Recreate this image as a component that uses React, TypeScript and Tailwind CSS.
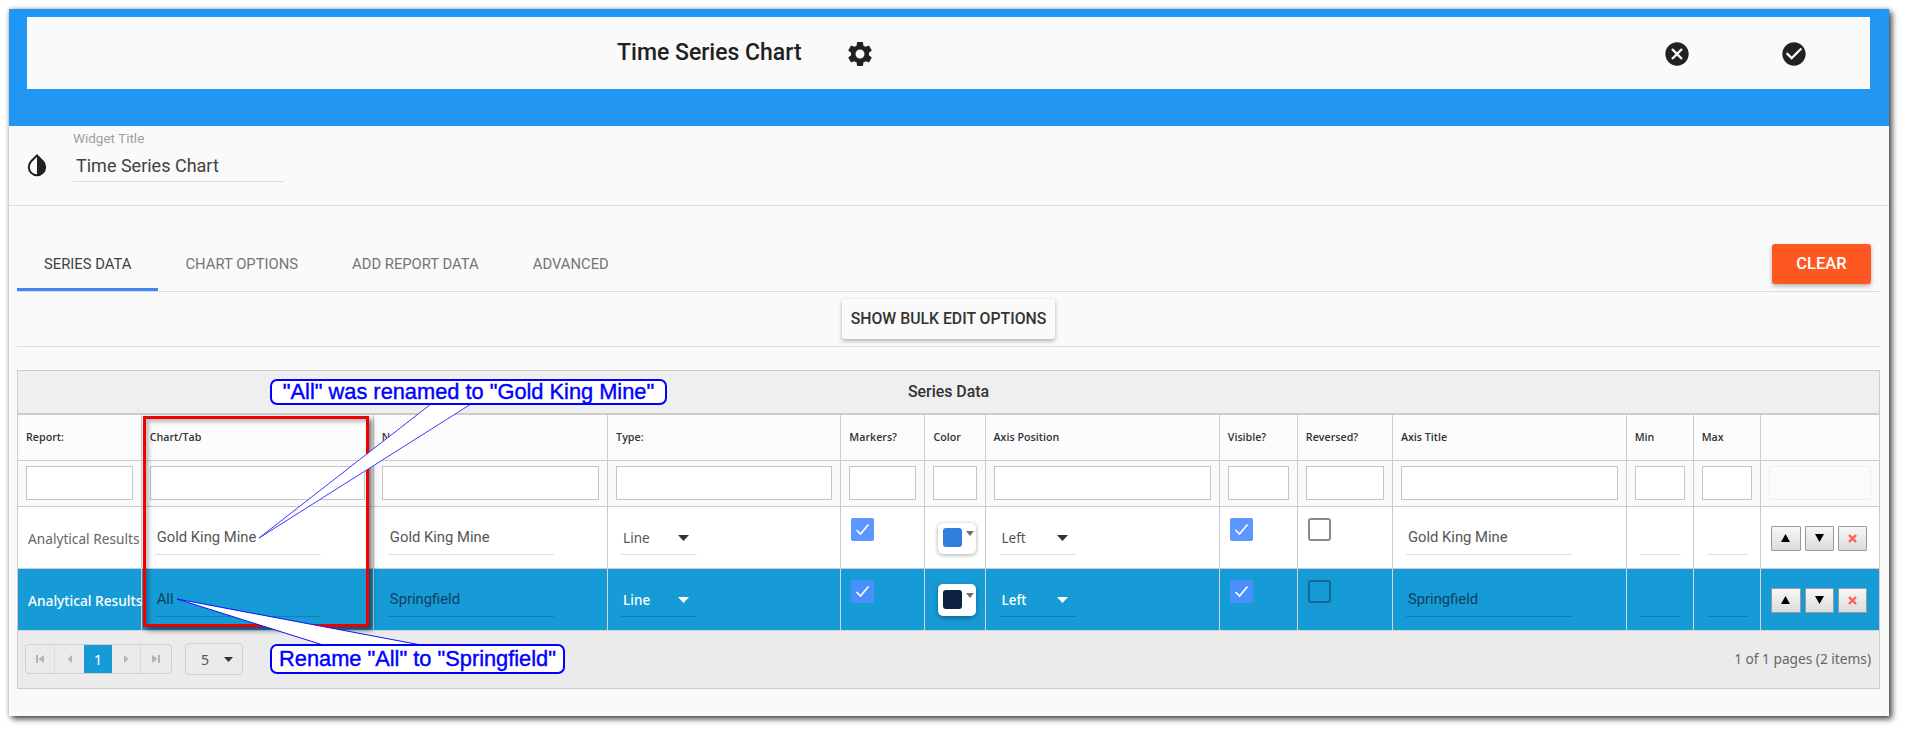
import { MdCancel, MdCheckCircle, MdSettings } from "react-icons/md";

const columns = [123, 232, 234, 233, 84, 60, 234, 78, 95, 233.5, 67, 67, 118.5];
const headers = ["Report:", "Chart/Tab", "Name", "Type:", "Markers?", "Color", "Axis Position", "Visible?", "Reversed?", "Axis Title", "Min", "Max", ""];

const Caret = ({ color, small }: { color: string; small?: boolean }) => (
    <svg width={small ? 9 : 11} height={small ? 5 : 6} viewBox="0 0 11 6" preserveAspectRatio="none" className="shrink-0">
        <path d="M0 0h11L5.500 6z" fill={color} />
    </svg>
);

const Field = ({ text, width, dark, left = 13 }: { text?: string; width: number; dark: boolean; left?: number }) => (
    <div
        className={`flex h-[48px] items-end border-b pb-[7px] pl-[2px] font-['Roboto',sans-serif] text-[14.800px] leading-[20px] ${dark ? "border-[#1280b5] text-[#0f3f5c]" : "border-[#e0e0e0] text-[#555555]"}`}
        style={{ width, marginLeft: left }}
    >
        {text}
    </div>
);

const SelectField = ({ text, dark, left }: { text: string; dark: boolean; left: number }) => (
    <div
        className={`flex h-[48px] w-[76px] items-end justify-between border-b pb-[6px] pl-[2px] pr-[8px] font-['Noto_Sans',sans-serif] text-[13.500px] leading-[20px] ${dark ? "border-[#1280b5] font-medium text-white" : "border-[#e0e0e0] text-[#555555]"}`}
        style={{ marginLeft: left }}
    >
        <span>{text}</span>
        <span className="mb-[7px]">
            <Caret color={dark ? "#ffffff" : "#333333"} />
        </span>
    </div>
);

const Check = ({ on, dark }: { on: boolean; dark: boolean }) =>
    on ? (
        <div className={`ml-[10px] mt-[11px] flex h-[23px] w-[23px] items-center justify-center rounded-[2px] ${dark ? "bg-[#4a8ffc]" : "bg-[#5c97ff]"}`}>
            <svg width="15" height="13" viewBox="0 0 15 13">
                <path d="M1.500 7l4 4L13.500 1.500" fill="none" stroke="#ffffff" strokeWidth="1.600" />
            </svg>
        </div>
    ) : (
        <div className={`ml-[10px] mt-[11px] h-[23px] w-[23px] rounded-[3px] border-2 ${dark ? "border-[#0f6a98]" : "border-[#8a8a8a] bg-white"}`} />
    );

const Swatch = ({ color, dark }: { color: string; dark: boolean }) => (
    <div
        className={`ml-[13px] flex w-[38px] items-start rounded-[5px] bg-white pl-[5px] ${dark ? "mt-[15px] h-[32px] pt-[6px] shadow-[0_2px_5px_rgba(0,0,0,0.35)]" : "mt-[16px] h-[31px] pt-[5px] shadow-[0_1px_4px_rgba(0,0,0,0.35)]"}`}
    >
        <div className="h-[19px] w-[19px] rounded-[3px]" style={{ backgroundColor: color }} />
        <svg width="8" height="5" viewBox="0 0 8 5" className="ml-[4px] mt-[3px]">
            <path d="M0 0h8L4 5z" fill="#6f6f6f" />
        </svg>
    </div>
);

const ActionButton = ({ width, children }: { width: number; children: React.ReactNode }) => (
    <div
        className="flex h-[25px] items-center justify-center rounded-[1px] border border-[#9a9a9a] bg-gradient-to-b from-[#f7f7f7] to-[#dcdcdc]"
        style={{ width }}
    >
        {children}
    </div>
);

const Actions = () => (
    <div className="flex gap-[4px] pl-[10px] pt-[19px]">
        <ActionButton width={30}>
            <svg width="9" height="8" viewBox="0 0 9 8"><path d="M4.500 0L9 8H0z" fill="#000000" /></svg>
        </ActionButton>
        <ActionButton width={29}>
            <svg width="9" height="8" viewBox="0 0 9 8"><path d="M0 0h9L4.500 8z" fill="#000000" /></svg>
        </ActionButton>
        <ActionButton width={29}>
            <svg width="9" height="9" viewBox="0 0 9 9"><path d="M1 1l7 7M8 1L1 8" stroke="#ff5c5c" strokeWidth="2.400" /></svg>
        </ActionButton>
    </div>
);

const DataRow = ({ chart, name, swatch, dark }: { chart: string; name: string; swatch: string; dark: boolean }) => {
    const cell = `h-[62px] border-r border-b p-0 align-top ${dark ? "border-[#d0d8dc]" : "border-[#cccccc]"}`;
    return (
        <tr className={dark ? "bg-[#179bd7]" : "bg-white"}>
            <td className={cell}>
                <div className={`whitespace-nowrap pl-[10px] pt-[22px] font-['Noto_Sans',sans-serif] text-[13.700px] leading-[20px] ${dark ? "font-medium text-white" : "text-[#666666]"}`}>
                    Analytical Results
                </div>
            </td>
            <td className={cell}><Field text={chart} width={166} dark={dark} /></td>
            <td className={cell}><Field text={name} width={166} dark={dark} left={14} /></td>
            <td className={cell}><SelectField text="Line" dark={dark} left={13} /></td>
            <td className={cell}><Check on dark={dark} /></td>
            <td className={cell}><Swatch color={swatch} dark={dark} /></td>
            <td className={cell}><SelectField text="Left" dark={dark} left={14} /></td>
            <td className={cell}><Check on dark={dark} /></td>
            <td className={cell}><Check on={false} dark={dark} /></td>
            <td className={cell}><Field text={name} width={166} dark={dark} /></td>
            <td className={cell}><Field width={41} dark={dark} /></td>
            <td className={cell}><Field width={41} dark={dark} /></td>
            <td className={`h-[62px] border-b p-0 align-top ${dark ? "border-[#d0d8dc]" : "border-[#cccccc]"}`}><Actions /></td>
        </tr>
    );
};

const PagerIcon = ({ d }: { d: string }) => (
    <svg width="10" height="10" viewBox="0 0 10 10"><path d={d} fill="#b4b4b4" /></svg>
);

const Pager = () => (
    <div className="flex h-[30px] w-[147px] overflow-hidden rounded-[4px] border border-[#cfcfcf]">
        <div className="flex w-[29px] items-center justify-center border-r border-[#dddddd]"><PagerIcon d="M1 1h2v8H1zM9 1v8L3.500 5z" /></div>
        <div className="flex w-[29px] items-center justify-center"><PagerIcon d="M7 1v8L2.500 5z" /></div>
        <div className="flex w-[28px] items-center justify-center bg-[#179bd7] font-['Noto_Sans',sans-serif] text-[15px] text-white">1</div>
        <div className="flex w-[29px] items-center justify-center border-r border-[#dddddd]"><PagerIcon d="M3 1v8L7.500 5z" /></div>
        <div className="flex flex-1 items-center justify-center"><PagerIcon d="M7 1h2v8H7zM1 1v8L6.500 5z" /></div>
    </div>
);

const DropIcon = () => (
    <svg width="20" height="23" viewBox="0 0 20 23" className="shrink-0">
        <path d="M10 1.500L15.800 7.300A8.200 8.200 0 1 1 4.200 7.300Z" fill="none" stroke="#212121" strokeWidth="2" />
        <path d="M10 1.500L15.800 7.300A8.200 8.200 0 0 1 10 21.300Z" fill="#212121" />
    </svg>
);

const Annotations = () => (
    <>
        <div className="absolute left-[143px] top-[416px] h-[211px] w-[226px] border-[3px] border-[#f00000] shadow-[3px_3px_5px_rgba(0,0,0,0.55),inset_3px_3px_4px_rgba(0,0,0,0.25)]" />
        <svg width="1906" height="733" className="pointer-events-none absolute left-0 top-0">
            <path d="M431 404L259 538L471 404Z" fill="#ffffff" />
            <path d="M431 404L259 538L471 404" fill="none" stroke="#3a3aff" strokeWidth="1" />
            <path d="M323 645L177 599L421 645Z" fill="#ffffff" />
            <path d="M323 645L177 599L421 645" fill="none" stroke="#1010ff" strokeWidth="1" />
        </svg>
        <div className="absolute left-[270px] top-[379px] flex h-[26px] w-[397px] items-center justify-center whitespace-nowrap rounded-[7px] border-2 border-[#0000ff] bg-white font-['Liberation_Sans',sans-serif] text-[21.800px] leading-none text-[#0000ff] [-webkit-text-stroke:0.4px_#0000ff]">
            "All" was renamed to "Gold King Mine"
        </div>
        <div className="absolute left-[270px] top-[644px] flex h-[30px] w-[295px] items-center justify-center whitespace-nowrap rounded-[7px] border-2 border-[#0000ff] bg-white font-['Liberation_Sans',sans-serif] text-[21.800px] leading-none text-[#0000ff] [-webkit-text-stroke:0.4px_#0000ff]">
            Rename "All" to "Springfield"
        </div>
    </>
);

export default function App() {
    return (
        <div className="relative h-[733px] w-[1906px] overflow-hidden bg-white font-['Roboto',sans-serif]">
            <div className="ml-[9px] mt-[9px] h-[707px] w-[1880px] bg-[#fafafa] shadow-[3px_3px_6px_rgba(0,0,0,0.7),0_0_4px_rgba(0,0,0,0.25)]">
                <div className="h-[117px] bg-[#2196f3] pl-[18px] pr-[19px] pt-[8px]">
                    <div className="flex h-[72px] items-center bg-[#fafafa] text-[#212121]">
                        <div className="ml-[590px] w-[228px] whitespace-nowrap text-[23px] font-medium">Time Series Chart</div>
                        <MdSettings size={30} className="mt-[2px]" />
                        <div className="ml-[788px]"><MdCancel size={28} className="mt-[2px]" /></div>
                        <div className="ml-[89px]"><MdCheckCircle size={28} className="mt-[2px]" /></div>
                    </div>
                </div>

                <div className="flex h-[80px] border-b border-[#dcdcdc]">
                    <div className="ml-[18px] mt-[28px]"><DropIcon /></div>
                    <div className="ml-[26px] mt-[4px]">
                        <div className="h-[16px] text-[13.500px] leading-[16px] text-[#9e9e9e]">Widget Title</div>
                        <div className="h-[36px] w-[211px] border-b border-[#dcdcdc] pl-[3px] pt-[7px] text-[18px] leading-[26px] text-[#424242]">Time Series Chart</div>
                    </div>
                </div>

                <div className="ml-[8px] mr-[9px]">
                    <div className="flex h-[86px] items-end justify-between border-b border-[#dcdcdc]">
                        <div className="flex text-[14.800px] font-normal leading-[20px] text-[#757575]">
                            <div className="h-[50px] border-b-[3px] border-[#4285f4] px-[27px] pt-[13px] text-[#424242]">SERIES DATA</div>
                            <div className="h-[50px] px-[27px] pt-[13px]">CHART OPTIONS</div>
                            <div className="h-[50px] px-[27px] pt-[13px]">ADD REPORT DATA</div>
                            <div className="h-[50px] px-[27px] pt-[13px]">ADVANCED</div>
                        </div>
                        <div className="mb-[7px] mr-[9px] flex h-[40px] w-[99px] items-center justify-center rounded-[3px] bg-[#ff5722] text-[16.500px] font-medium text-white shadow-[0_2px_4px_rgba(0,0,0,0.3)]">
                            CLEAR
                        </div>
                    </div>

                    <div className="flex h-[55px] items-start justify-center border-b border-[#dcdcdc] pt-[7px]">
                        <div className="flex h-[40px] w-[213px] items-center justify-center whitespace-nowrap rounded-[3px] bg-[#fafafa] text-[15.800px] font-medium text-[#333333] shadow-[0_2px_4px_rgba(0,0,0,0.3)]">
                            SHOW BULK EDIT OPTIONS
                        </div>
                    </div>

                    <div className="mt-[23px] border border-[#cccccc]">
                        <div className="flex h-[44px] items-center justify-center border-b-2 border-[#cccccc] bg-[#efefef] text-[15.900px] font-medium text-[#333333]">
                            Series Data
                        </div>
                        <table className="w-full table-fixed border-collapse">
                            <colgroup>
                                {columns.map((w, i) => <col key={i} style={{ width: w }} />)}
                            </colgroup>
                            <tbody>
                                <tr className="bg-[#fcfcfc]">
                                    {headers.map((h, i) => (
                                        <td key={i} className={`h-[45px] border-b border-[#cccccc] pl-[8px] text-left font-['Open_Sans',sans-serif] text-[10.700px] font-semibold text-[#333333] ${i < 12 ? "border-r" : ""}`}>
                                            {h}
                                        </td>
                                    ))}
                                </tr>
                                <tr className="bg-[#fafafa]">
                                    {headers.map((_, i) => (
                                        <td key={i} className={`h-[46px] border-b border-[#cccccc] px-[8px] ${i < 12 ? "border-r" : ""}`}>
                                            <div className={`h-[34px] w-full border ${i < 12 ? "border-[#c4c4c4] bg-white" : "border-[#eeeeee] bg-[#fbfbfb]"}`} />
                                        </td>
                                    ))}
                                </tr>
                                <DataRow chart="Gold King Mine" name="Gold King Mine" swatch="#2f80de" dark={false} />
                                <DataRow chart="All" name="Springfield" swatch="#0d2240" dark />
                            </tbody>
                        </table>
                        <div className="flex h-[57px] items-center bg-[#ebebeb] pl-[7px] pr-[8px]">
                            <Pager />
                            <div className="ml-[13px] flex h-[32px] w-[58px] items-center justify-between rounded-[4px] border border-[#cfcfcf] pl-[15px] pr-[9px] font-['Noto_Sans',sans-serif] text-[14px] text-[#555555]">
                                <span>5</span>
                                <Caret color="#333333" small />
                            </div>
                            <div className="ml-auto font-['Noto_Sans',sans-serif] text-[13.700px] text-[#666666]">1 of 1 pages (2 items)</div>
                        </div>
                    </div>
                </div>
            </div>
            <Annotations />
        </div>
    );
}
